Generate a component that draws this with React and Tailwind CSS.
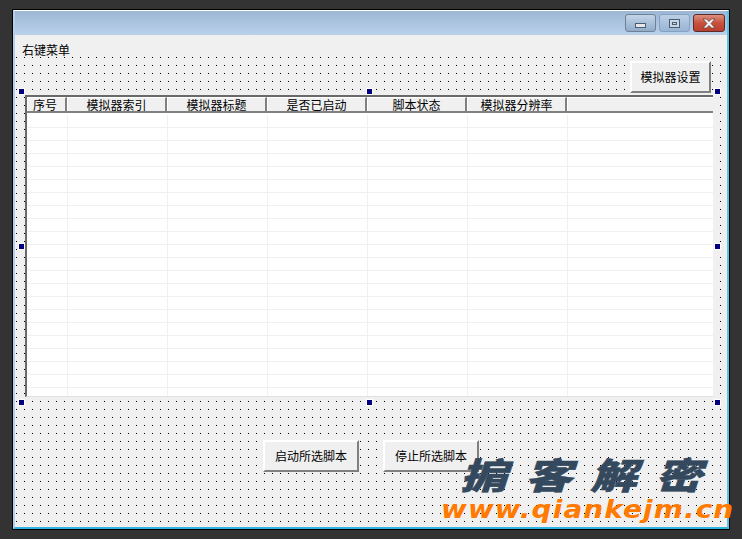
const columns = [
  { label: '序号', width: 'w-[40px]', pad: 'pr-[3px]' },
  { label: '模拟器索引', width: 'w-[100px]', pad: '' },
  { label: '模拟器标题', width: 'w-[100px]', pad: '' },
  { label: '是否已启动', width: 'w-[100px]', pad: '' },
  { label: '脚本状态', width: 'w-[100px]', pad: '' },
  { label: '模拟器分辨率', width: 'w-[100px]', pad: '' },
];

const rows = Array.from({ length: 22 });

function Handle({ className }) {
  return <div className={`absolute w-[7px] h-[7px] bg-[#000080] border border-white ${className}`} />;
}

function FormButton({ children, className = '' }) {
  return (
    <button className={`h-[32px] flex items-center justify-center bg-[#f0f0f0] border-t-2 border-l-2 border-t-white border-l-white border-r-2 border-b-2 border-r-[#808080] border-b-[#808080] text-[12px] text-black ${className}`}>
      {children}
    </button>
  );
}

function CaptionButton({ className, children }) {
  return (
    <div className={`h-[18px] flex items-center justify-center rounded-[3px] border ${className}`}>
      {children}
    </div>
  );
}

export default function App() {
  return (
    <div className="relative w-[742px] h-[539px] overflow-hidden bg-[#333333] pt-[9px] pl-[12px] font-['Noto_Sans_CJK_SC',sans-serif]">
      <div className="w-[718px] h-[521px] bg-black p-px">
        <div className="w-full h-full flex flex-col border-t border-t-white border-l-2 border-l-[#b3cfea] border-r-2 border-r-[#5cc3e8] border-b-2 border-b-[#2fb6e2]">
          {/* title bar */}
          <div className="h-[24px] shrink-0 flex items-start justify-end gap-[3px] pt-[3px] pr-[2px] bg-gradient-to-b from-[#9db6d3] to-[#b9d1ea]">
            <CaptionButton className="w-[31px] border-[#6f8199] bg-gradient-to-b from-[#c3d4e7] via-[#a9c0da] to-[#92acc9]">
              <div className="w-[11px] h-[5px] mt-[5px] bg-[#e8e8e8] border border-[#4b5d73]" />
            </CaptionButton>
            <CaptionButton className="w-[31px] border-[#85a0c0] bg-gradient-to-b from-[#bcd0e6] via-[#a9c2dd] to-[#9ab6d5]">
              <div className="w-[11px] h-[9px] border border-[#4b5d73] bg-[#c9d6e4] flex items-center justify-center">
                <div className="w-[5px] h-[3px] border border-[#4b5d73]" />
              </div>
            </CaptionButton>
            <CaptionButton className="w-[32px] border-[#5e2a2a] bg-gradient-to-b from-[#dc8f7e] via-[#c9503c] to-[#b8402e]">
              <svg width="16" height="11" viewBox="0 0 16 11">
                <path d="M2 1 L5.5 1 L8 3.5 L10.5 1 L14 1 L10 5.5 L14 10 L10.5 10 L8 7.5 L5.5 10 L2 10 L6 5.5 Z" fill="#f2f2f2" stroke="#5a3a3a" strokeWidth="0.7" />
              </svg>
            </CaptionButton>
          </div>

          {/* menu */}
          <div className="h-[22px] shrink-0 bg-[#f0f0f0] pl-[7px] pt-[8px] text-[12px] leading-[14px] text-black">右键菜单</div>

          {/* form surface with grid dots */}
          <div className="relative flex-1 bg-[#f0f0f0] bg-[radial-gradient(circle_at_1.5px_0.5px,#000_0.5px,transparent_0.5px)] bg-[size:8px_8px]">
            <div className="flex justify-end pt-[4px] pr-[16px]">
              <FormButton className="w-[81px]">模拟器设置</FormButton>
            </div>

            {/* list */}
            <div className="ml-[10px] mt-[2px] w-[688px] h-[302px] bg-white border-t-2 border-l-2 border-b border-t-[#696969] border-l-[#696969] border-b-[#e0e0e0] overflow-hidden">
              <div className="flex h-[16px] bg-[#f0f0f0] border-b-2 border-b-[#808080]">
                {columns.map((col) => (
                  <div key={col.label} className={`${col.width} ${col.pad} h-[14px] shrink-0 flex items-center justify-center border-t border-l border-t-white border-l-white border-r-2 border-r-[#808080] text-[12px] leading-none text-black`}>
                    {col.label}
                  </div>
                ))}
                <div className="flex-1 border-t border-l border-white" />
              </div>
              <div className="pt-[2px] pl-px">
                {rows.map((_, i) => (
                  <div key={i} className="flex h-[13px] border-b border-b-[#f0f0f0]">
                    {columns.map((col) => (
                      <div key={col.label} className={`${col.width} shrink-0 border-r border-r-[#f0f0f0]`} />
                    ))}
                  </div>
                ))}
              </div>
            </div>

            {/* bottom buttons */}
            <div className="flex gap-[24px] pl-[248px] pt-[43px]">
              <FormButton className="w-[96px]">启动所选脚本</FormButton>
              <FormButton className="w-[96px]">停止所选脚本</FormButton>
            </div>

            <Handle className="left-[3px] top-[31px]" />
            <Handle className="left-[351px] top-[31px]" />
            <Handle className="left-[699px] top-[31px]" />
            <Handle className="left-[3px] top-[186px]" />
            <Handle className="left-[699px] top-[186px]" />
            <Handle className="left-[3px] top-[342px]" />
            <Handle className="left-[351px] top-[342px]" />
            <Handle className="left-[699px] top-[342px]" />
          </div>
        </div>
      </div>

      {/* watermark */}
      <div className="absolute left-[460px] top-[451px] text-[36px] leading-[44px] font-black italic tracking-[14px] whitespace-nowrap text-[#34495e] origin-left scale-x-[1.3] [-webkit-text-stroke:0.5px_#34495e]">掮客解密</div>
      <div className="absolute left-[441px] top-[496px] text-[24px] leading-[28px] font-bold italic tracking-[1px] whitespace-nowrap text-[#ff7a00] origin-left scale-x-[1.16] font-['DejaVu_Sans',sans-serif]">www.qiankejm.cn</div>
    </div>
  );
}
